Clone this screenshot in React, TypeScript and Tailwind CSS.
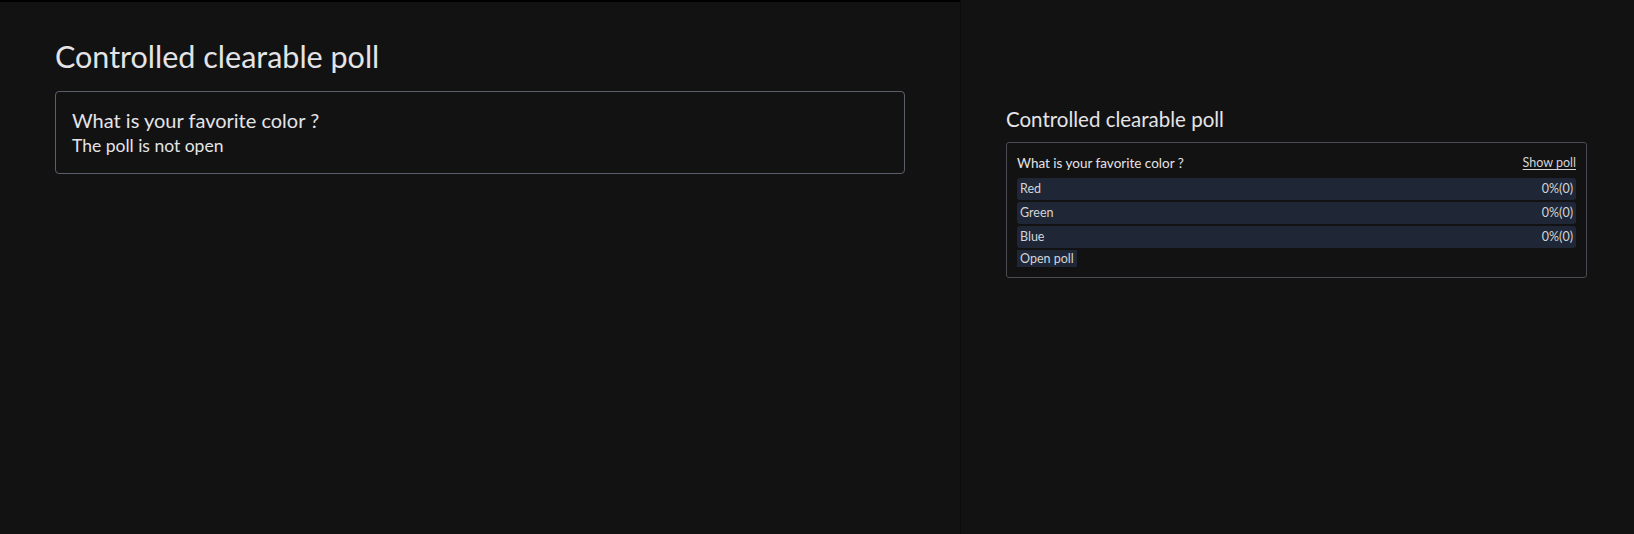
import React from "react";

const options = ["Red", "Green", "Blue"];

function ClosedPoll() {
  return (
    <div className="rounded-[4px] border border-[#5b5f6c] px-[16px] pt-[15px] pb-[15px]">
      <p className="text-[20px] leading-[26px] text-[#e4e4e7]">What is your favorite color ?</p>
      <p className="text-[17.5px] leading-[25px] text-[#e4e4e7]">The poll is not open</p>
    </div>
  );
}

function AdminPoll() {
  return (
    <div className="rounded-[3px] border border-[#4b4b52] px-[10px] pt-[10px] pb-[10px]">
      <div className="flex h-[20px] items-center justify-between">
        <span className="text-[13.5px] leading-[20px] text-[#e4e4e7]">What is your favorite color ?</span>
        <button className="text-[12.5px] leading-[16px] text-[#d4d4d8] underline underline-offset-2">Show poll</button>
      </div>
      <div className="mt-[5px] flex flex-col gap-[2px]">
        {options.map((o) => (
          <div key={o} className="flex h-[22px] items-center justify-between rounded-[3px] bg-[#1f2736] px-[3px] text-[12.5px] text-[#d4d4d8]">
            <span>{o}</span>
            <span>0%(0)</span>
          </div>
        ))}
      </div>
      <button className="mt-[2px] block h-[17px] bg-[#1f2736] px-[3px] text-[12.5px] leading-[17px] text-[#d4d4d8]">Open poll</button>
    </div>
  );
}

export default function App() {
  return (
    <div className="flex h-[534px] w-[1634px] bg-[#121212] font-['Lato','Noto_Sans',sans-serif]">
      <div className="w-[960px] shrink-0 border-t-2 border-black px-[55px] pt-[34px]">
        <h1 className="text-[30.5px] leading-[40px] text-[#e4e4e7]">Controlled clearable poll</h1>
        <div className="mt-[15px]">
          <ClosedPoll />
        </div>
      </div>
      <div className="w-px shrink-0 bg-[#0d0d0d]" />
      <div className="flex-1 pl-[45px] pr-[47px] pt-[106px]">
        <h2 className="text-[20.5px] leading-[26px] text-[#e4e4e7]">Controlled clearable poll</h2>
        <div className="mt-[10px]">
          <AdminPoll />
        </div>
      </div>
    </div>
  );
}
